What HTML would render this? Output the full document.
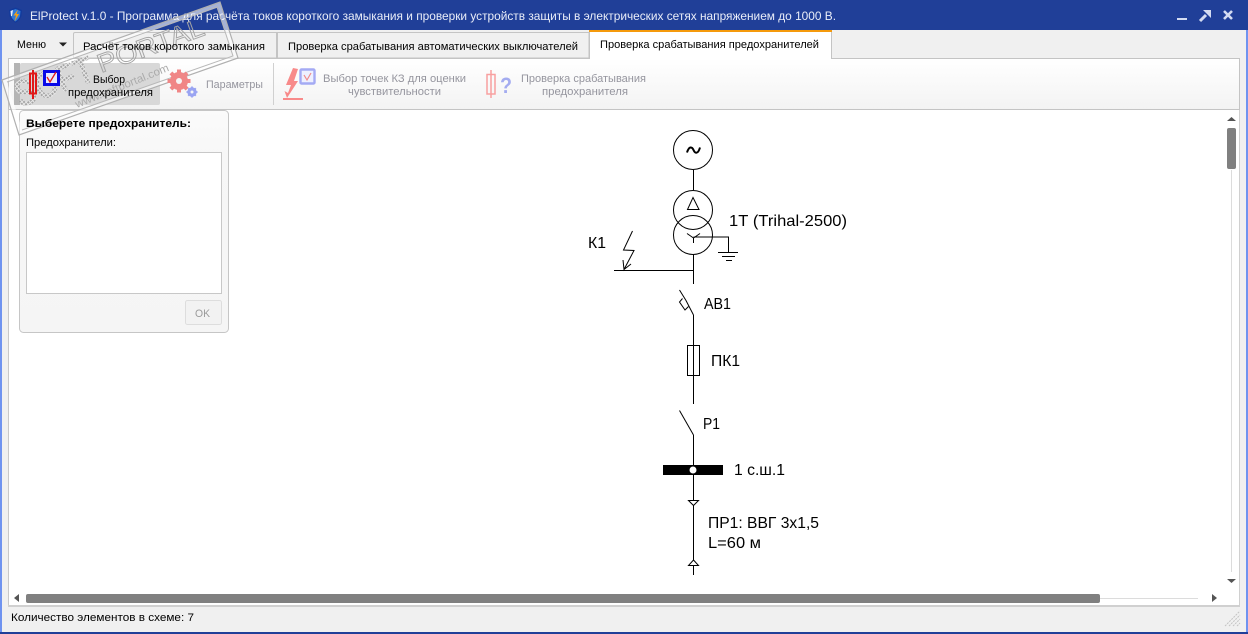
<!DOCTYPE html>
<html><head><meta charset="utf-8"><title>ElProtect</title>
<style>
html,body{margin:0;padding:0;background:#f0f0f0;width:1248px;height:634px;overflow:hidden}
svg{display:block}
text{font-family:"Liberation Sans","Noto Sans CJK SC",sans-serif;font-size:11px;fill:#000}
.g text{fill:#95959e}
.d text{font-size:16px;fill:#000}
.d .l{stroke:#000;stroke-width:1;fill:none}
.d .w{stroke:#000;stroke-width:1;fill:#fff}
</style></head><body>
<svg width="1248" height="634" viewBox="0 0 1248 634" xmlns="http://www.w3.org/2000/svg">
<defs>
<linearGradient id="tb" x1="0" y1="0" x2="0" y2="1"><stop offset="0" stop-color="#ffffff"/><stop offset="1" stop-color="#f3f3f3"/></linearGradient>
<linearGradient id="gb" x1="0" y1="0" x2="0" y2="1"><stop offset="0" stop-color="#fbfbfb"/><stop offset=".2" stop-color="#f7f7f7"/><stop offset="1" stop-color="#f5f5f5"/></linearGradient>
<pattern id="dots" width="3" height="3" patternUnits="userSpaceOnUse" patternTransform="rotate(-20)"><rect width="3" height="3" fill="#e8e8e8"/><rect width="2" height="2" fill="#a4a4a4"/></pattern>
</defs>
<!-- window frame -->
<rect width="1248" height="634" fill="#f0f0f0"/>
<rect x="0" y="30" width="2" height="604" fill="#6f93f0"/>
<rect x="1246" y="30" width="2" height="604" fill="#6f93f0"/>
<rect x="0" y="0" width="1248" height="30" fill="#203f98"/>
<rect x="0" y="632" width="1248" height="2" fill="#203f98"/>
<!-- title icon -->
<path d="M15.500 7.500 L22 10 L21.500 16 Q20 20 15.500 23 Q11 20 9.500 16 L9 10 Z" fill="#123a9c"/>
<path d="M15.500 9 L20.500 11 L20 16 Q19 19 15.500 21.500 Q12 19 11 16 L10.500 11 Z" fill="#2f7ad8"/>
<path d="M10.500 11 L13 10 L12 16 L11 16 Z" fill="#e6eef8"/>
<path d="M18 9.500 L13.500 15.500 L16 15.500 L14.500 21.500 L19 14 L16.500 14 Z" fill="#f5a010"/>
<text x="30" y="20" textLength="806" lengthAdjust="spacingAndGlyphs" style="font-size:12px;fill:#e9edf8">ElProtect v.1.0 - Программа для расчёта токов короткого замыкания и проверки устройств защиты в электрических сетях напряжением до 1000 В.</text>
<!-- window buttons -->
<rect x="1177" y="18" width="10" height="2" fill="#d4dcf2"/>
<path d="M1200 21 L1206 15" stroke="#d4dcf2" stroke-width="3" fill="none"/>
<path d="M1203 10 L1211 10 L1211 18 Z" fill="#d4dcf2"/>
<path d="M1224 11 L1232 19 M1232 11 L1224 19" stroke="#d4dcf2" stroke-width="2.600" fill="none"/>
<!-- tabs -->
<path d="M73.500 58 V34 Q73.500 32.500 75 32.500 H276.500 V58 Z" fill="#f0f0f0" stroke="#c4c4c4"/>
<path d="M277.500 58 V32.500 H589 V58 Z" fill="#f0f0f0" stroke="#c4c4c4"/>
<!-- toolbar -->
<rect x="8.500" y="58.500" width="1231" height="51" fill="url(#tb)" stroke="#c4c4c4"/>
<rect x="589" y="30" width="243" height="29" fill="#ffffff"/>
<path d="M589.500 59 V32 M831.500 59 V32" stroke="#c4c4c4"/>
<rect x="589" y="30" width="243" height="2" fill="#f59a0c"/>
<text x="600" y="48" textLength="219" lengthAdjust="spacingAndGlyphs">Проверка срабатывания предохранителей</text>
<!-- pressed button -->
<rect x="14" y="63" width="6" height="42" fill="#b4b4b4"/>
<rect x="20" y="63" width="140" height="42" rx="2" fill="#d8d8d8"/>
<!-- work area -->
<rect x="9" y="110" width="1230" height="495" fill="#ffffff"/>
<rect x="8" y="110" width="1" height="496" fill="#c8c8c8"/>
<rect x="1239" y="110" width="1" height="496" fill="#d0d0d0"/>
<rect x="8" y="605" width="1232" height="2" fill="#d0d0d0"/>
<!-- group box -->
<rect x="19.500" y="110.500" width="209" height="222" rx="4" fill="url(#gb)" stroke="#c6c6c6"/>
<rect x="26.500" y="152.500" width="195" height="141" fill="#fff" stroke="#c8c8c8"/>
<rect x="185.500" y="300.500" width="36" height="24" rx="2" fill="#f2f2f2" stroke="#dddddd"/>
<!-- watermark stamp (under icons and text) -->
<path d="M4.500 81 L219 5 L235.500 57 L21 132.500 Z" fill="none" stroke="#ffffff" stroke-width="4" opacity=".6"/>
<path d="M2 80 L220 2 L238 58 L19 135 Z" fill="none" stroke="#b0b0b0" stroke-width="1.200"/>
<path d="M7 82 L217 7 L233 56 L22 130" fill="none" stroke="#b8b8b8" stroke-width="1"/>
<g transform="translate(20,108) rotate(-20)">
<text x="0" y="0" textLength="82" lengthAdjust="spacingAndGlyphs" style="font-size:38px;font-weight:bold;fill:url(#dots)">SOFT</text>
</g>
<g transform="translate(101,73) rotate(-20)">
<text x="0" y="0" textLength="112" lengthAdjust="spacingAndGlyphs" style="font-size:26px;fill:none;stroke:#a4a4a4;stroke-width:.9">PORTAL</text>
</g>
<g transform="translate(77,108) rotate(-22)">
<text x="0" y="0" textLength="100" lengthAdjust="spacingAndGlyphs" style="font-size:11px;fill:#ababab">www.softportal.com</text>
</g>
<!-- tab text -->
<text x="17" y="48" textLength="29" lengthAdjust="spacingAndGlyphs">Меню</text>
<path d="M59 42.500 H67 L63 46.500 Z" fill="#222"/>
<text x="83" y="50" textLength="182" lengthAdjust="spacingAndGlyphs">Расчёт токов короткого замыкания</text>
<text x="288" y="50" textLength="290" lengthAdjust="spacingAndGlyphs">Проверка срабатывания автоматических выключателей</text>
<!-- button icon -->
<path d="M33 70 V99" stroke="#e01818" stroke-width="2"/>
<rect x="30" y="73.500" width="6" height="20" fill="none" stroke="#e01818" stroke-width="2"/>
<rect x="44.500" y="71.500" width="14" height="13" fill="#e8e8ff" stroke="#0808e8" stroke-width="3"/>
<path d="M47 77 L50 82 L56 72" fill="none" stroke="#e01818" stroke-width="1.300"/>
<text x="93" y="83" textLength="32" lengthAdjust="spacingAndGlyphs">Выбор</text>
<text x="68" y="96" textLength="85" lengthAdjust="spacingAndGlyphs">предохранителя</text>
<!-- gear -->
<g fill="none">
<circle cx="179" cy="81" r="5.500" stroke="#f08686" stroke-width="7"/>
<path d="M179 69.500 V92.500 M167.500 81 H190.500 M170.900 72.900 L187.100 89.100 M187.100 72.900 L170.900 89.100" stroke="#f08686" stroke-width="4"/>
<circle cx="179" cy="81" r="3" fill="#f6f4f4"/>
<circle cx="192" cy="92" r="3.200" stroke="#9aa4f2" stroke-width="3"/>
<path d="M192 86.500 V97.500 M186.500 92 H197.500 M188.200 88.200 L195.800 95.800 M195.800 88.200 L188.200 95.800" stroke="#9aa4f2" stroke-width="1.800"/>
<circle cx="192" cy="92" r="1.500" fill="#f6f6f6"/>
</g>
<g class="g">
<text x="206" y="88" textLength="57" lengthAdjust="spacingAndGlyphs">Параметры</text>
<text x="323" y="82" textLength="143" lengthAdjust="spacingAndGlyphs">Выбор точек КЗ для оценки</text>
<text x="348" y="95" textLength="93" lengthAdjust="spacingAndGlyphs">чувствительности</text>
<text x="521" y="82" textLength="125" lengthAdjust="spacingAndGlyphs">Проверка срабатывания</text>
<text x="542" y="95" textLength="86" lengthAdjust="spacingAndGlyphs">предохранителя</text>
</g>
<rect x="273" y="63" width="1" height="42" fill="#d0d0d0"/>
<!-- lightning icon -->
<path d="M293 68 L298 69 L294 81 L298 81 L287 98 L284.500 91 L288 93 L291 85 L286 85 Z" fill="#f88a8a"/>
<rect x="283" y="98" width="20" height="2" fill="#f88a8a"/>
<rect x="300.500" y="69.500" width="14" height="14" rx="1" fill="#eef0ff" stroke="#a4aaf4" stroke-width="2.400"/>
<path d="M304 75 L307 80 L311 73" fill="none" stroke="#f08a8a" stroke-width="1.200"/>
<!-- fuse 2 -->
<path d="M491 70 V98" stroke="#f8a0a0" stroke-width="1.500"/>
<rect x="487" y="74.500" width="8" height="19.500" fill="none" stroke="#f8a0a0" stroke-width="1.500"/>
<text x="500" y="93" textLength="12" lengthAdjust="spacingAndGlyphs" style="font-size:22px;font-weight:bold;fill:#a4acf0">?</text>
<!-- scrollbars -->
<path d="M1227 121 L1231.500 117 L1236 121 Z" fill="#555"/>
<rect x="1231" y="170" width="1" height="402" fill="#dcdcdc"/>
<rect x="1227" y="128" width="9" height="41" rx="2" fill="#808080"/>
<path d="M1227 579 L1236 579 L1231.500 583 Z" fill="#555"/>
<path d="M19 594 V602 L14 598 Z" fill="#555"/>
<rect x="1100" y="598" width="98" height="1" fill="#dcdcdc"/>
<rect x="26" y="594" width="1074" height="9" rx="2" fill="#808080"/>
<path d="M1212 594 V602 L1217 598 Z" fill="#555"/>
<!-- group box text -->
<text x="26" y="127" textLength="165" lengthAdjust="spacingAndGlyphs" style="font-weight:bold;fill:#000">Выберете предохранитель:</text>
<text x="26" y="146" textLength="90" lengthAdjust="spacingAndGlyphs">Предохранители:</text>
<text x="195" y="317" textLength="15" lengthAdjust="spacingAndGlyphs" style="fill:#9a9a9a">OK</text>
<!-- status -->
<text x="11" y="621" textLength="183" lengthAdjust="spacingAndGlyphs">Количество элементов в схеме: 7</text>
<path d="M1225 626 L1240 611 M1229 626 L1240 615 M1233 626 L1240 619 M1237 626 L1240 623" stroke="#c4c4c4" stroke-width="1" stroke-dasharray="2 1"/>
<!-- diagram -->
<g class="d">
<g class="l">
<circle cx="693" cy="150" r="19.500"/>
<circle cx="693" cy="210" r="19.500"/>
<circle cx="693" cy="235" r="19.500"/>
</g>
<path d="M687 152.500 C689 146 692 146.500 693.500 150 S698 154.500 700 147.500" fill="none" stroke="#000" stroke-width="2"/>
<g class="l" shape-rendering="crispEdges">
<path d="M693.500 170 V190"/>
<path d="M693.500 237 H728.500 V252"/>
<path d="M718 252.500 H738 M722 256.500 H735 M726 260.500 H732"/>
<path d="M693.500 254 V284"/>
<path d="M614 270.500 H693"/>
<rect x="687.500" y="345.500" width="12" height="30"/>
<path d="M693.500 315 V404"/>
<path d="M693.500 435 V465"/>
<path d="M693.500 475 V575"/>
</g>
<g class="l">
<path d="M693 197.500 L699 209.500 H687.500 Z"/>
<path d="M693.500 238 L687 233.500 M693.500 238 L700 233.500 M693.500 238 V243"/>
<path d="M632.500 231 L623.500 250 L634 250.500 L624 269.500 L623 260 M624 269.500 L631 264"/>
<path d="M679.500 290 L686 300.500 L693.500 315"/>
<path d="M682.500 298.500 L679.500 302 L685 310 L688.500 306.500"/>
<path d="M679.500 410.500 L693.500 435"/>
</g>
<path class="w" d="M688.500 500.500 H698.500 L693.500 505.500 Z"/>
<path class="w" d="M693.500 560 L698.500 565.500 H688.500 Z"/>
<rect x="663" y="465" width="60" height="10" fill="#000"/>
<circle cx="693" cy="470" r="3.500" fill="#fff"/>
<text x="729" y="226" textLength="118" lengthAdjust="spacingAndGlyphs">1Т (Trihal-2500)</text>
<text x="588" y="248" textLength="18" lengthAdjust="spacingAndGlyphs">К1</text>
<text x="704" y="309" textLength="27" lengthAdjust="spacingAndGlyphs">АВ1</text>
<text x="711" y="366" textLength="29" lengthAdjust="spacingAndGlyphs">ПК1</text>
<text x="703" y="429" textLength="17" lengthAdjust="spacingAndGlyphs">Р1</text>
<text x="734" y="475" textLength="51" lengthAdjust="spacingAndGlyphs">1 с.ш.1</text>
<text x="708" y="528" textLength="111" lengthAdjust="spacingAndGlyphs">ПР1: ВВГ 3х1,5</text>
<text x="708" y="548" textLength="53" lengthAdjust="spacingAndGlyphs">L=60 м</text>
</g>
</svg>
</body></html>
